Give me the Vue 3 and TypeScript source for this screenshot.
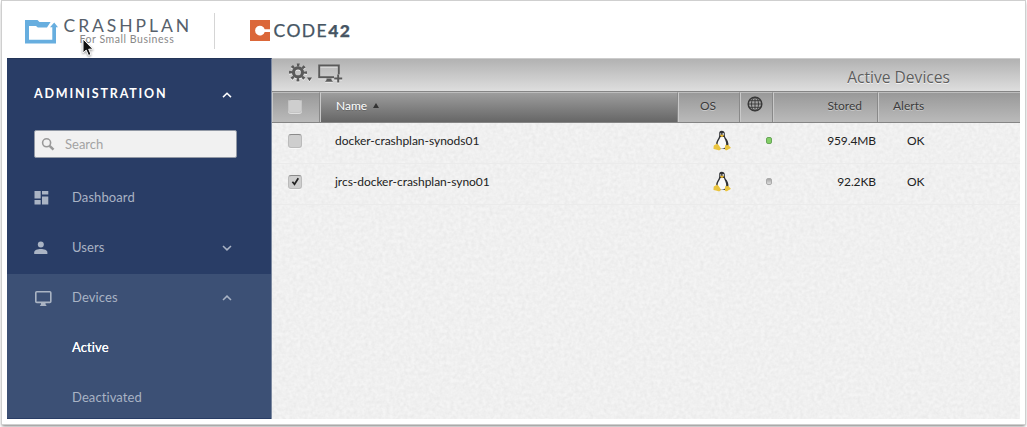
<script setup lang="ts">
interface Device {
  name: string
  stored: string
  alerts: string
  online: boolean
  checked: boolean
}

const devices: Device[] = [
  { name: 'docker-crashplan-synods01', stored: '959.4MB', alerts: 'OK', online: true, checked: false },
  { name: 'jrcs-docker-crashplan-syno01', stored: '92.2KB', alerts: 'OK', online: false, checked: true },
]
</script>

<template>
  <div class="frame">
    <header class="brandbar">
      <svg class="folder" width="33" height="24" viewBox="0 0 33 24">
        <path d="M0 0H12.5L14.5 2H25.6L22 7.5H12.8L11 6H4V19.7H27.3V7.3H25L29.2 2.4L33 7.3H31V23.5H0Z" fill="#67aedf" />
      </svg>
      <div class="crashplan">
        <span class="cp-name">CRASHPLAN</span>
        <span class="cp-sub">For Small Business</span>
      </div>
      <span class="brand-rule"></span>
      <svg class="c42mark" width="20" height="21" viewBox="0 0 20 21">
        <path d="M0 0H20V9.3H14.7A4.9 4.9 0 1 0 14.7 11.9H20V21H0Z" fill="#db6739" />
      </svg>
      <span class="c42">CODE<b>42</b></span>
      <svg class="cursor" width="14" height="20" viewBox="0 0 14 20">
        <path d="M2 1V15L5.2 12.1L7.5 17.5L10 16.4L7.7 11.2H12Z" fill="#111" stroke="#fff" stroke-width="1" />
      </svg>
    </header>

    <div class="body">
      <nav class="sidebar">
        <div class="admin">
          <span>ADMINISTRATION</span>
          <svg class="chev" width="10" height="6" viewBox="0 0 10 6"><path d="M1 5.1L5 1.2L9 5.1" /></svg>
        </div>
        <label class="search">
          <svg width="14" height="14" viewBox="0 0 14 14" fill="none" stroke="#999">
            <circle cx="5.6" cy="5.8" r="4" stroke-width="1.6" />
            <path d="M8.6 8.8L12.5 12.6" stroke-width="2.5" />
          </svg>
          <span>Search</span>
        </label>
        <div class="item">
          <svg class="ico" width="18" height="18" viewBox="0 0 18 18">
            <path d="M.5 2H6.7V9.5H.5ZM8 2H14.3V5.5H8ZM.5 11H6.7V15.5H.5ZM8 7.5H14.3V15.5H8Z" />
          </svg>
          <span>Dashboard</span>
        </div>
        <div class="item">
          <svg class="ico" width="18" height="18" viewBox="0 0 18 18">
            <circle cx="6.8" cy="5.4" r="3" />
            <path d="M.2 15V13.4C.2 11.2 3.6 10 6.8 10S13.4 11.2 13.4 13.4V15Z" />
          </svg>
          <span>Users</span>
          <svg class="chev" width="10" height="6" viewBox="0 0 10 6"><path d="M1 1L5 4.9L9 1" /></svg>
        </div>
        <div class="open">
          <div class="item first">
            <svg class="ico" width="18" height="18" viewBox="0 0 18 18">
              <rect x="1.8" y="2.8" width="15" height="10.6" rx="1" fill="none" stroke="#aab4c4" stroke-width="1.6" />
              <path d="M7 13.5H11.5V15.3L12.7 17H5.8L7 15.3Z" />
            </svg>
            <span>Devices</span>
            <svg class="chev" width="10" height="6" viewBox="0 0 10 6"><path d="M1 5L5 1.1L9 5" /></svg>
          </div>
          <div class="item sub active"><span>Active</span></div>
          <div class="item sub"><span>Deactivated</span></div>
        </div>
      </nav>

      <main class="main">
        <svg class="grain" width="748" height="361">
          <filter id="grain" x="0" y="0" width="100%" height="100%">
            <feTurbulence type="fractalNoise" baseFrequency=".28" numOctaves="2" seed="4" />
            <feColorMatrix values="0 0 0 0 0  0 0 0 0 0  0 0 0 0 0  .055 .04 0 0 -.03" />
          </filter>
          <rect width="748" height="361" filter="url(#grain)" />
        </svg>
        <div class="toolbar">
          <svg class="gear" width="24" height="20" viewBox="0 0 24 20">
            <g fill="none" stroke="#5a5a5a">
              <circle cx="9" cy="9.4" r="4.5" stroke-width="3.2" />
              <circle cx="9" cy="9.4" r="7.4" stroke-width="3.2" stroke-dasharray="2.6 3.212" stroke-dashoffset="1.3" />
            </g>
            <path d="M18 14.5H23L20.5 18.3Z" fill="#555" />
          </svg>
          <svg class="adddev" width="25" height="20" viewBox="0 0 25 20">
            <path d="M1.2 13.8V1.6H20.8V10.5M16 13.2H.2" fill="none" stroke="#5a5a5a" stroke-width="2" />
            <path d="M8.5 14.5H13.5V16L15 17.8H7L8.5 16Z" fill="#5a5a5a" />
            <path d="M20.2 10.5V18.5M16.2 14.5H24.2" stroke="#5a5a5a" stroke-width="2" />
          </svg>
          <h1>Active Devices</h1>
        </div>

        <div class="grid head">
          <div class="cell"><span class="box"></span></div>
          <div class="cell name">
            <span>Name</span>
            <svg width="6" height="6" viewBox="0 0 6 6"><path d="M0 5L3 0L6 5Z" fill="#333" /></svg>
          </div>
          <div class="cell center">OS</div>
          <div class="cell globe">
            <svg width="16" height="16" viewBox="0 0 16 16" fill="none" stroke="#383838" stroke-width=".9">
              <circle cx="8" cy="8" r="6.8" stroke-width="1.5" />
              <ellipse cx="8" cy="8" rx="3.5" ry="6.8" />
              <path d="M8 1V15M1 8H15M2.2 4.7H13.8M2.2 11.3H13.8" />
            </svg>
          </div>
          <div class="cell stored">Stored</div>
          <div class="cell alerts">Alerts</div>
        </div>

        <div v-for="d in devices" :key="d.name" class="grid row">
          <div class="cell">
            <span class="box">
              <svg v-if="d.checked" width="9" height="9" viewBox="0 0 9 9">
                <path d="M1.4 4.8L3.5 7.3L7.3 1.2" fill="none" stroke="#222" stroke-width="1.7" />
              </svg>
            </span>
          </div>
          <div class="cell name">{{ d.name }}</div>
          <div class="cell tux">
            <svg width="18" height="21" viewBox="0 0 18 21">
              <path d="M8.8 .8C6.5 .8 6 2.5 6.2 4.6C6.4 7 5.5 8 4.2 10.2C3 12.3 2.6 14.8 3.6 17L8 19H12L15.3 16.2C16 12.6 14.4 9.9 12.8 8C11.6 6.5 12 5.2 11.8 3.5C11.6 1.8 10.6 .8 8.8 .8Z" fill="#303236" />
              <path d="M7.6 6.9L10.9 6.9C11.5 9 13.6 11.3 13.2 15.2C12.8 17.5 10.8 18.9 8.3 18.7C6 18.4 4.3 16.3 4.6 13.5C4.9 10.8 6.6 9.6 7.2 7.5Z" fill="#fafafa" />
              <circle cx="7.6" cy="4" r=".8" fill="#ddd" />
              <circle cx="10.2" cy="4" r=".9" fill="#ddd" />
              <path d="M6.8 5.6L8.7 4.6L11.2 5.6L9 7.3Z" fill="#e6b52c" />
              <path d="M3.3 13.6L5.5 14.8L7.8 18.2C7.9 20.1 6.1 20.6 4.8 20.1L.7 19.1C.1 18.3 .8 17.3 .7 16C1 15 2.7 15.3 3.3 13.6ZM12.4 14.8C13.4 15.6 15 15.3 15.3 14.6L16.1 16.1L17.8 17.5C17.6 18.7 15.8 18.9 14.3 20.1C13.2 20.7 11.7 20.2 11.8 18.6Z" fill="#eac43e" />
            </svg>
          </div>
          <div class="cell status"><i :class="{ online: d.online }"></i></div>
          <div class="cell stored">{{ d.stored }}</div>
          <div class="cell alerts">{{ d.alerts }}</div>
        </div>
      </main>
    </div>
  </div>
</template>

<style>
body {
  background: #fff;
}
</style>

<style scoped>
* {
  box-sizing: border-box;
}
.frame {
  width: 1023px;
  height: 423px;
  margin: 1px 2px 3px;
  padding: 0 5px;
  background: #fff;
  box-shadow: 0 0 0 1px #cfcfcf, 0 2px 3px #777;
  font-family: Lato, "Liberation Sans", sans-serif;
  font-size: 12px;
  color: #333;
  overflow: hidden;
}
.brandbar {
  position: relative;
  display: flex;
  align-items: flex-start;
  height: 57px;
}
.folder {
  margin: 18.5px 0 0 18px;
}
.crashplan {
  display: flex;
  flex-direction: column;
  width: 138px;
  margin: 14.5px 0 0 5.5px;
  white-space: nowrap;
}
.cp-name {
  font-size: 17.5px;
  line-height: 20px;
  letter-spacing: 2.95px;
  color: #56606b;
}
.cp-sub {
  margin: -3px 0 0 16px;
  font-size: 10.5px;
  line-height: 12px;
  letter-spacing: .55px;
  color: #888;
}
.brand-rule {
  width: 1px;
  height: 36px;
  margin: 12px 0 0 12px;
  background: #d5d5d5;
}
.c42mark {
  margin: 19px 0 0 35px;
}
.c42 {
  margin: 18px 0 0 4px;
  font-size: 17.5px;
  line-height: 23px;
  letter-spacing: 1.45px;
  color: #465563;
  -webkit-text-stroke: .25px #465563;
}
.c42 b {
  font-weight: 900;
}
.cursor {
  position: absolute;
  left: 74px;
  top: 37px;
  filter: drop-shadow(0 1px 1px #0006);
}
.body {
  display: flex;
  height: 361px;
}
.sidebar {
  width: 265px;
  background: #293d66;
  border-top: 1px solid #233558;
  border-right: 1px solid #7b88a0;
  color: #a9b3c4;
  font-size: 13px;
}
.admin {
  display: flex;
  align-items: center;
  height: 71px;
  padding: 0 39px 2px 27px;
  color: #fff;
  font-size: 12.5px;
  font-weight: 700;
  letter-spacing: 1.8px;
}
.chev {
  margin: 2px 0 0 auto;
  fill: none;
  stroke: currentColor;
  stroke-width: 1.5;
}
.search {
  display: flex;
  align-items: center;
  width: 203px;
  height: 28px;
  margin: 0 0 14px 27px;
  padding-left: 6px;
  gap: 10px;
  border: 1px solid #9299a5;
  border-radius: 2px;
  background: #f1f1f1;
  color: #a3a3a3;
}
.item {
  display: flex;
  align-items: center;
  height: 50px;
  padding: 0 39px 0 27px;
  letter-spacing: .1px;
}
.ico {
  width: 18px;
  margin: 2px 20px 0 0;
  fill: #aab4c4;
}
.open {
  height: 144px;
  margin-top: 2px;
  background: #3c5075;
  overflow: hidden;
}
.item.first {
  height: 48px;
  padding-bottom: 2px;
}
.sub {
  padding-left: 65px;
}
.sub.active {
  color: #fff;
  text-shadow: 0 0 .6px #fff;
}
.main {
  position: relative;
  width: 748px;
  background: #f4f4f4;
}
.grain {
  position: absolute;
  inset: 0;
}
.toolbar {
  position: relative;
  display: flex;
  height: 33px;
  background: linear-gradient(#b2b2b2, #dedede);
  border-top: 1px solid #ccc;
}
.gear {
  margin: 4px 0 0 17px;
  filter: drop-shadow(0 1px 0 #eee);
}
.adddev {
  margin: 5px 0 0 5px;
  filter: drop-shadow(0 1px 0 #eee);
}
h1 {
  margin: 8px 70px 0 auto;
  font: 400 15.6px/21px "Open Sans", sans-serif;
  color: #5d5d5d;
  text-shadow: 0 1px 0 #f2f2f2;
}
.grid {
  position: relative;
  display: grid;
  grid-template-columns: 48px 358px 62px 33px 105px 142px;
}
.cell {
  display: flex;
  align-items: center;
}
.head {
  height: 32px;
  border-top: 1px solid #858585;
  border-bottom: 1px solid #858585;
  color: #3b3b3b;
  text-shadow: 0 1px 0 #c8c8c8;
}
.head .cell {
  padding-bottom: 4px;
  background: linear-gradient(#999, #bababa);
  border-top: 1px solid #bdbdbd;
  border-right: 1px solid #898989;
  border-left: 1px solid #c9c9c9;
}
.head .cell:last-child {
  border-right: 0;
}
.head .cell.name {
  gap: 6px;
  background: linear-gradient(#9d9d9d, #666);
  color: #fff;
  text-shadow: 0 1px 0 #666;
}
.box {
  display: flex;
  align-items: center;
  justify-content: center;
  width: 14px;
  height: 14px;
  margin: 1px 0 0 16px;
  background: #cecece;
  border: 1px solid #bbb;
  border-top-color: #8a8a8a;
  border-radius: 3px;
  box-shadow: 0 1px 0 #fff9;
}
.head .box {
  margin: 1px 0 0 15px;
  border-color: #c4c4c4;
  border-top-color: #999;
}
.name {
  padding-left: 15px;
}
.center {
  justify-content: center;
  padding-right: 2px;
}
.head .globe {
  justify-content: center;
  padding: 0 3px 7px 0;
}
.stored {
  justify-content: flex-end;
  padding-right: 15px;
}
.alerts {
  padding-left: 14px;
}
.row {
  height: 41px;
  padding-bottom: 6px;
  border-bottom: 1px solid #ebebeb;
  color: #222;
}
.row .stored {
  padding-right: 2px;
  letter-spacing: -.1px;
}
.row .alerts {
  padding-left: 29px;
}
.row .name {
  letter-spacing: -.03px;
}
.tux {
  padding-left: 35px;
}
.status {
  justify-content: center;
}
.status i {
  width: 6px;
  height: 7px;
  margin-left: 25px;
  border: 1px solid #aaa;
  border-radius: 2px;
  background: linear-gradient(#a5a5a5, #ddd);
}
.status i.online {
  border-color: #69a55a;
  background: #83cf66;
}
</style>
